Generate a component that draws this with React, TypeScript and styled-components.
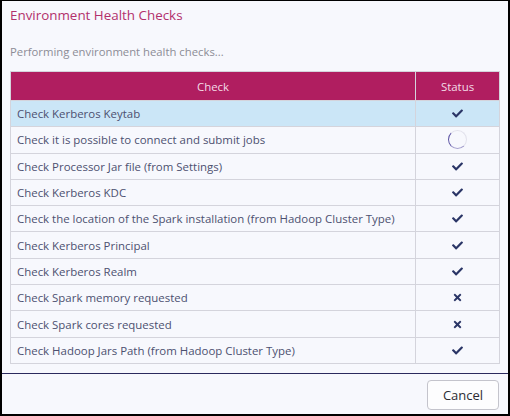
import React from 'react'
import styled, {createGlobalStyle, keyframes} from 'styled-components'
import {FaCheck, FaTimes} from 'react-icons/fa'

const GlobalStyle = createGlobalStyle`
    html, body {
        margin: 0;
        padding: 0;
        background: #000;
        font-family: "Open Sans", "Liberation Sans", sans-serif;
    }
`

const spin = keyframes`
    from { transform: rotate(0deg); }
    to { transform: rotate(360deg); }
`

const Dialog = styled.div`
    margin: 1px 2px 0 2px;
    height: 413px;
    background: #f7f8fd;
    display: flex;
    flex-direction: column;
    box-sizing: border-box;
`

const Body = styled.div`
    padding: 6px 8px 0 8px;
    flex: 1;
`

const Title = styled.h1`
    margin: 0;
    font-size: 13.4px;
    font-weight: 400;
    color: #b2306c;
    line-height: 17px;
`

const Subtitle = styled.p`
    margin: 20px 0 11px 0;
    font-size: 11.3px;
    color: #8c8c96;
    line-height: 16px;
`

const Table = styled.table`
    width: 490px;
    border-collapse: collapse;
    font-size: 11.45px;
    border: 1px solid #d4d4dc;
`

const HeadCell = styled.th<{$w?: number}>`
    background: #b01e60;
    color: #f3dce7;
    font-weight: 400;
    height: 28px;
    padding: 0;
    text-align: center;
    border: 1px solid #d4d4dc;
    width: ${p => (p.$w ? `${p.$w}px` : 'auto')};
`

const Row = styled.tr<{$active?: boolean}>`
    background: ${p => (p.$active ? '#cbe6f7' : 'transparent')};
`

const Cell = styled.td`
    height: 25.3px;
    padding: 0 6px;
    color: #4c5070;
    border: 1px solid #d4d4dc;
    white-space: nowrap;
`

const StatusCell = styled(Cell)`
    text-align: center;
    color: #2a3566;
    line-height: 0;
`

const Spinner = styled.span`
    display: inline-block;
    width: 17px;
    height: 17px;
    border-radius: 50%;
    border: 1px solid #e2e2ec;
    border-left-color: #5b52a3;
    border-bottom-color: #a7a2cf;
    animation: ${spin} 1s linear infinite;
    animation-play-state: paused;
    vertical-align: middle;
`

const Footer = styled.div`
    border-top: 1px solid #2b2a5e;
    padding: 6px 9px 4px 9px;
    display: flex;
    justify-content: flex-end;
`

const Button = styled.button`
    font-family: "Open Sans", "Liberation Sans", sans-serif;
    font-size: 13px;
    color: #2c2c34;
    background: #fdfdfe;
    border: 1px solid #c4c4cc;
    border-radius: 4px;
    width: 72px;
    height: 30px;
    padding: 0;
`

type Status = 'ok' | 'fail' | 'running'

const checks: {label: string; status: Status}[] = [
    {label: 'Check Kerberos Keytab', status: 'ok'},
    {label: 'Check it is possible to connect and submit jobs', status: 'running'},
    {label: 'Check Processor Jar file (from Settings)', status: 'ok'},
    {label: 'Check Kerberos KDC', status: 'ok'},
    {label: 'Check the location of the Spark installation (from Hadoop Cluster Type)', status: 'ok'},
    {label: 'Check Kerberos Principal', status: 'ok'},
    {label: 'Check Kerberos Realm', status: 'ok'},
    {label: 'Check Spark memory requested', status: 'fail'},
    {label: 'Check Spark cores requested', status: 'fail'},
    {label: 'Check Hadoop Jars Path (from Hadoop Cluster Type)', status: 'ok'},
]

const StatusIcon = ({status}: {status: Status}) => {
    if (status === 'running') return <Spinner/>
    if (status === 'fail') return <FaTimes size={11}/>
    return <FaCheck size={11}/>
}

const App = () => {
    return (
        <>
            <GlobalStyle/>
            <Dialog>
                <Body>
                    <Title>Environment Health Checks</Title>
                    <Subtitle>Performing environment health checks...</Subtitle>
                    <Table>
                        <thead>
                            <tr>
                                <HeadCell>Check</HeadCell>
                                <HeadCell $w={83}>Status</HeadCell>
                            </tr>
                        </thead>
                        <tbody>
                            {checks.map((c, i) => (
                                <Row key={c.label} $active={i === 0}>
                                    <Cell>{c.label}</Cell>
                                    <StatusCell><StatusIcon status={c.status}/></StatusCell>
                                </Row>
                            ))}
                        </tbody>
                    </Table>
                </Body>
                <Footer>
                    <Button>Cancel</Button>
                </Footer>
            </Dialog>
        </>
    )
}

export default App
